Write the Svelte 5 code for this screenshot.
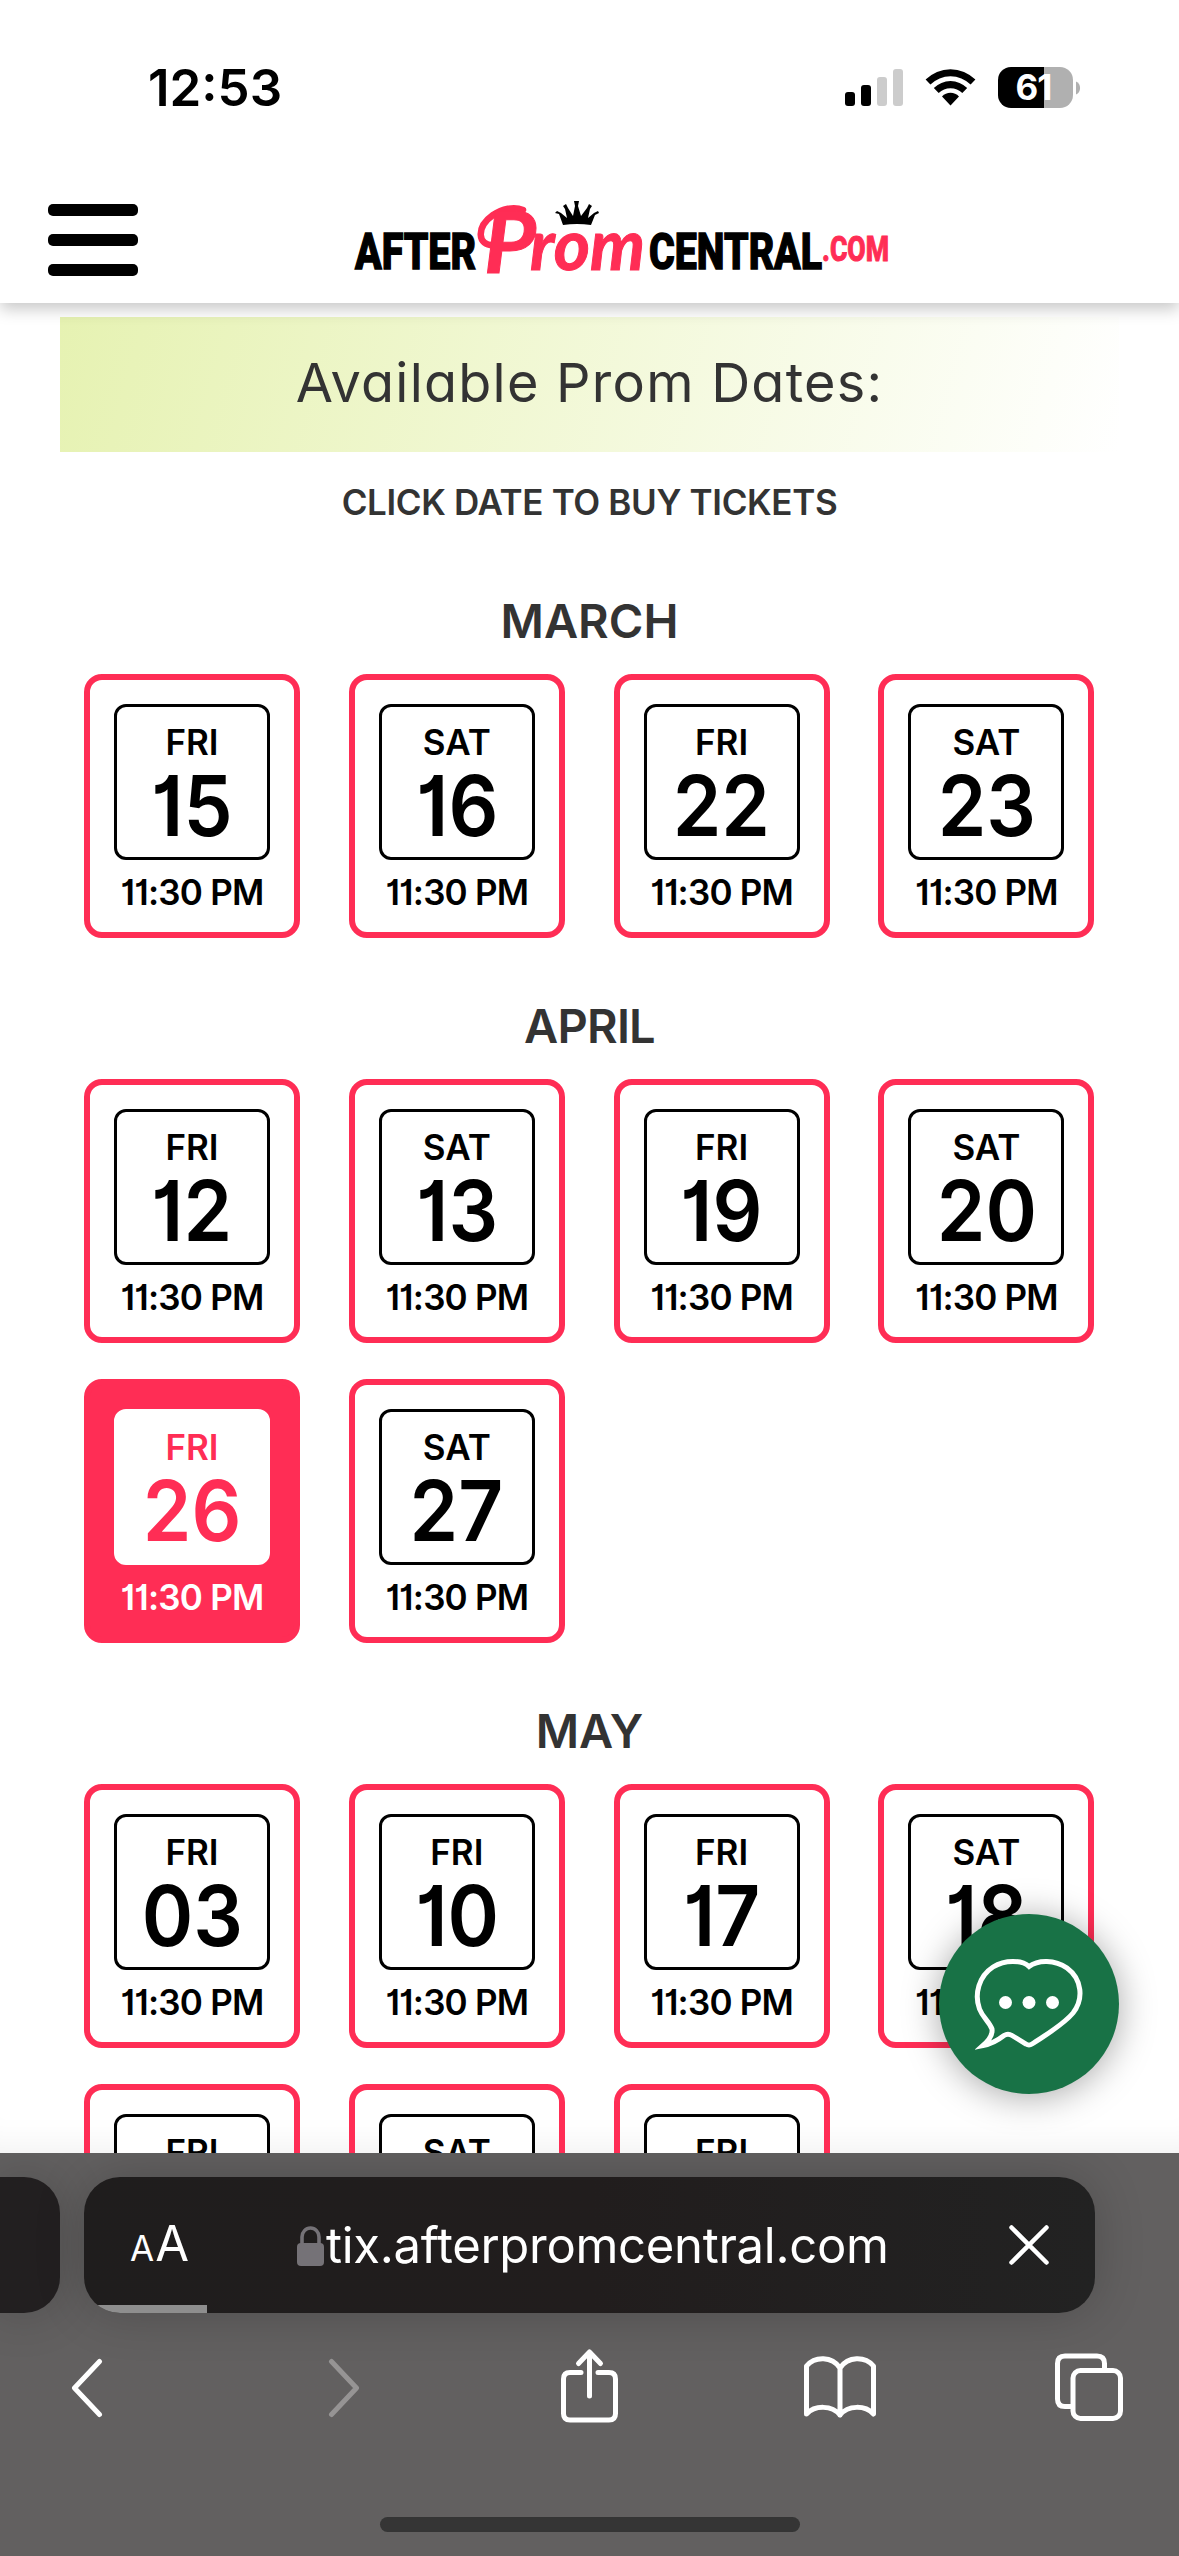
<script lang="ts">
  type Day = { dow: string; num: string; active?: boolean };
  const months: { name: string; days: Day[] }[] = [
    {
      name: 'MARCH',
      days: [
        { dow: 'FRI', num: '15' },
        { dow: 'SAT', num: '16' },
        { dow: 'FRI', num: '22' },
        { dow: 'SAT', num: '23' },
      ],
    },
    {
      name: 'APRIL',
      days: [
        { dow: 'FRI', num: '12' },
        { dow: 'SAT', num: '13' },
        { dow: 'FRI', num: '19' },
        { dow: 'SAT', num: '20' },
        { dow: 'FRI', num: '26', active: true },
        { dow: 'SAT', num: '27' },
      ],
    },
    {
      name: 'MAY',
      days: [
        { dow: 'FRI', num: '03' },
        { dow: 'FRI', num: '10' },
        { dow: 'FRI', num: '17' },
        { dow: 'SAT', num: '18' },
        { dow: 'FRI', num: '24' },
        { dow: 'SAT', num: '25' },
        { dow: 'FRI', num: '31' },
      ],
    },
  ];
</script>

<div class="screen">
  <div class="status">
    <span class="clock">12:53</span>
    <div class="indicators">
      <svg class="signal" width="58" height="37" viewBox="0 0 58 37">
        <rect x="0" y="23" width="10" height="14" rx="3" />
        <rect x="16" y="16" width="10" height="21" rx="3" />
        <rect x="32" y="8" width="10" height="29" rx="3" fill="#ccc" />
        <rect x="48" y="0" width="10" height="37" rx="3" fill="#ccc" />
      </svg>
      <svg class="wifi" width="51" height="37" viewBox="0 0 51 37">
        <path d="M0.6 10.6a35 35 0 0 1 49.8 0l-4.8 5a28.6 28.6 0 0 0-40.2 0z" />
        <path d="M8.8 19a23.6 23.6 0 0 1 33.4 0l-4.9 5a16.8 16.8 0 0 0-23.6 0z" />
        <path d="M17 27.4a12 12 0 0 1 17 0L25.5 36.5z" />
      </svg>
      <div class="battery"><span>61</span></div>
      <svg class="nub" width="5" height="14" viewBox="0 0 5 14"><path d="M0 0.5C5.4 2.5 5.4 11.500 0 13.500z" fill="#b0b0b0" /></svg>
    </div>
  </div>

  <header>
    <div class="burger"><i></i><i></i><i></i></div>
    <svg class="logo" width="540" height="84" viewBox="352 198 540 84">
      <g class="block">
        <text x="355" y="269" textLength="121" lengthAdjust="spacingAndGlyphs">AFTER</text>
        <text x="649" y="269" textLength="173" lengthAdjust="spacingAndGlyphs">CENTRAL</text>
      </g>
      <text class="com" x="822" y="260.500" textLength="67" lengthAdjust="spacingAndGlyphs">.COM</text>
      <g class="script">
        <path d="M494 245C477 246 476 227 493 215C502 209 514 206 523 210" fill="none" stroke="#ff2d55" stroke-width="6.500" stroke-linecap="round" />
        <text class="big" x="484" y="273" textLength="52" lengthAdjust="spacingAndGlyphs">P</text>
        <text class="small" x="530" y="270" textLength="115" lengthAdjust="spacingAndGlyphs">rom</text>
      </g>
      <path d="M563 225L559 214L555 213L557 211L561 213L567 218L565 209L563 206L566 204L568 208L573 216L575 206L574 201H579L578 206L581 216L587 208L589 204L592 206L590 209L588 218L594 213L598 211L599 213L595 215L591 225Q577 223 563 225z" />
    </svg>
  </header>

  <main>
    <div class="banner"><span>Available Prom Dates:</span></div>
    <p class="hint">CLICK DATE TO BUY TICKETS</p>
    {#each months as month}
      <section>
        <h2 class:tight={month.name === 'APRIL'}>{month.name}</h2>
        <div class="grid">
          {#each month.days as day}
            <div class="card" class:active={day.active}>
              <div class="date">
                <span class="dow">{day.dow}</span>
                <span class="num">{day.num}</span>
              </div>
              <span class="time">11:30 PM</span>
            </div>
          {/each}
        </div>
      </section>
    {/each}
  </main>

  <div class="chat">
    <svg width="180" height="180" viewBox="0 0 180 180">
      <path d="M90 52.500C83 46 66 45.500 54 53C40 62 35 80 40.500 95C44 104 50 107 53 115C54 122 48 128 44 131.500C52 130 58 127 65 121.500Q69 119 73 121.500L87 130Q90 132 93 130C108 120 124 111 134 99C145 85 143 65 128 54C116 45.500 99 45.500 90 52.500z" fill="none" stroke="#fff" stroke-width="5" />
      <circle cx="66.500" cy="88.500" r="6.500" fill="#fff" />
      <circle cx="90" cy="88.500" r="6.500" fill="#fff" />
      <circle cx="113.500" cy="88.500" r="6.500" fill="#fff" />
    </svg>
  </div>

  <footer>
    <div class="tabs">
      <div class="prev"></div>
      <div class="address">
        <div class="aa"><span class="minor">A</span><span>A</span></div>
        <div class="url">
          <svg width="27" height="40" viewBox="0 0 27 40">
            <rect x="0" y="17" width="27" height="23" rx="4" fill="#757277" />
            <path d="M5 18V11a8.500 9 0 0 1 17 0V18" fill="none" stroke="#757277" stroke-width="3.600" />
          </svg>
          <span>tix.afterpromcentral.com</span>
        </div>
        <svg class="stop" width="40" height="40" viewBox="0 0 40 40"><path d="M2.500 2.500L37.500 37.500M37.500 2.500L2.500 37.500" stroke="#fff" stroke-width="4.500" stroke-linecap="round" /></svg>
        <div class="progress"></div>
      </div>
    </div>
    <nav>
      <svg width="32" height="76" viewBox="0 0 32 76"><path d="M28.500 13.500L3.500 40L28.500 66.500" /></svg>
      <svg class="off" width="32" height="76" viewBox="0 0 32 76"><path d="M3.500 13.500L28.500 40L3.500 66.500" /></svg>
      <svg width="57" height="76" viewBox="0 0 57 76"><path d="M20 24.500H9Q2.500 24.500 2.500 31V65.500Q2.500 72 9 72H48Q54.500 72 54.500 65.500V31Q54.500 24.500 48 24.500H37M28.500 48V5M17.500 15.500L28.500 4L39.500 15.500" /></svg>
      <svg width="72" height="76" viewBox="0 0 72 76"><path d="M36 20C28 8 11 8 2.500 18V66C11 57 28 57 36 67C44 57 61 57 69.500 66V18C61 8 44 8 36 20V67" /></svg>
      <svg width="68" height="76" viewBox="0 0 68 76"><path d="M17 58.500H10Q2.500 58.500 2.500 51V15.500Q2.500 8 10 8H42Q49.500 8 49.500 15.500V22" /><rect x="18" y="22.500" width="47.500" height="48" rx="7.500" /></svg>
    </nav>
    <div class="home"></div>
  </footer>
</div>

<style>
  :global(body) {
    margin: 0;
    background: #fff;
  }
  .screen {
    position: relative;
    width: 1179px;
    height: 2556px;
    overflow: hidden;
    display: flex;
    flex-direction: column;
    background: #fff;
    font-family: Inter, 'Open Sans', sans-serif;
    color: #000;
  }
  .status {
    flex: none;
    height: 177px;
    box-sizing: border-box;
    padding: 67px 98px 0 148px;
    display: flex;
    justify-content: space-between;
    align-items: flex-start;
    background: #fff;
    z-index: 2;
  }
  .clock {
    font-size: 51px;
    font-weight: 600;
    line-height: 42px;
  }
  .indicators {
    display: flex;
    align-items: center;
    height: 41px;
  }
  .wifi {
    margin-left: 22px;
  }
  .battery {
    margin-left: 22px;
    width: 75px;
    height: 41px;
    border-radius: 13px;
    background: linear-gradient(90deg, #000 46px, #b0b0b0 46px);
    color: #fff;
    font-size: 35px;
    font-weight: 700;
    line-height: 41px;
    text-align: center;
    letter-spacing: -1px;
  }
  .battery span {
    margin-right: 4px;
  }
  .nub {
    margin-left: 3px;
  }
  header {
    flex: none;
    height: 126px;
    box-sizing: border-box;
    padding: 21px 0 0 48px;
    display: flex;
    align-items: flex-start;
    background: #fff;
    box-shadow: 0 6px 15px rgba(0, 0, 0, 0.22);
    z-index: 1;
  }
  .burger {
    margin-top: 6px;
    width: 90px;
    display: flex;
    flex-direction: column;
    gap: 18px;
  }
  .burger i {
    height: 12px;
    border-radius: 5px;
    background: #000;
  }
  .logo {
    margin-left: 214px;
    overflow: visible;
  }
  .block text {
    font: 800 50px 'Roboto', sans-serif;
    stroke: #000;
    stroke-width: 1.5px;
  }
  .com {
    font: 800 35px 'Roboto', sans-serif;
    fill: #ff2d55;
    stroke: #ff2d55;
    stroke-width: 1px;
  }
  .script text {
    font-family: Lato, sans-serif;
    font-style: italic;
    font-weight: 700;
    fill: #ff2d55;
    stroke: #ff2d55;
    stroke-width: 1px;
  }
  .script .big {
    font-size: 86px;
  }
  .script .small {
    font-size: 70px;
  }
  main {
    flex: none;
    height: 1850px;
    overflow: hidden;
    padding: 14px 60px 0;
    box-sizing: border-box;
    box-shadow: inset 0 -40px 40px -40px rgba(0, 0, 0, 0.08);
  }
  .banner {
    height: 135px;
    display: flex;
    justify-content: center;
    background: linear-gradient(105deg, #e6f2b2, #fff);
    color: #333;
    font-size: 54px;
    line-height: 131px;
    letter-spacing: 1.25px;
    font-feature-settings: 'cv11';
    white-space: nowrap;
  }
  .hint {
    margin: 25px 0 6px;
    text-align: center;
    color: #333;
    font-size: 35px;
    font-weight: 600;
    line-height: 50px;
    letter-spacing: -0.35px;
  }
  h2 {
    margin: 0 0 23px;
    padding-top: 58px;
    text-align: center;
    color: #333;
    font-size: 47px;
    font-weight: 600;
    line-height: 60px;
  }
  .tight {
    letter-spacing: -0.8px;
  }
  .grid {
    margin: 0 24.6px 0 24px;
    display: grid;
    grid-template-columns: repeat(4, 216px);
    justify-content: space-between;
    row-gap: 36px;
  }
  .card {
    height: 264px;
    box-sizing: border-box;
    border: 6px solid #ff2d55;
    border-radius: 18px;
    padding-top: 24px;
    display: flex;
    flex-direction: column;
    align-items: center;
    font-weight: 600;
    font-feature-settings: 'cv01', 'calt' 0;
  }
  .date {
    width: 156px;
    height: 156px;
    box-sizing: border-box;
    border: 3px solid #000;
    border-radius: 12px;
    padding-top: 13px;
    display: flex;
    flex-direction: column;
    align-items: center;
    background: #fff;
  }
  .dow {
    font-size: 35px;
    line-height: 45px;
  }
  .num {
    font-size: 84px;
    line-height: 81px;
    transform: scaleX(0.93);
  }
  .time {
    margin-top: 12px;
    font-size: 35px;
    line-height: 40px;
    letter-spacing: -0.8px;
    white-space: nowrap;
  }
  .active {
    background: #ff2d55;
    color: #fff;
  }
  .active .date {
    border-color: #fff;
    color: #ff2d55;
  }
  .chat {
    position: absolute;
    left: 939px;
    top: 1914px;
    width: 180px;
    height: 180px;
    border-radius: 50%;
    background: #187246;
    box-shadow: 0 3px 36px rgba(0, 0, 0, 0.35);
  }
  footer {
    position: relative;
    flex: none;
    height: 403px;
    box-sizing: border-box;
    padding-top: 24px;
    background: #626060;
    color: #fff;
    overflow: hidden;
  }
  .tabs {
    display: flex;
    gap: 24px;
  }
  .prev {
    width: 60px;
    height: 136px;
    border-radius: 0 36px 36px 0;
    background: #221f20;
    box-shadow: 0 0 50px rgba(0, 0, 0, 0.2);
  }
  .address {
    position: relative;
    width: 1011px;
    height: 136px;
    box-sizing: border-box;
    padding: 2px 46px 0 46px;
    border-radius: 36px;
    overflow: hidden;
    display: flex;
    align-items: center;
    background: linear-gradient(90deg, #1f1d1d, #211d1d 50%, #222);
    box-shadow: 0 0 50px rgba(0, 0, 0, 0.2);
  }
  .aa {
    width: 167px;
    display: flex;
    align-items: baseline;
    gap: 1px;
    font-size: 49px;
    line-height: 60px;
  }
  .minor {
    font-size: 35px;
  }
  .url {
    display: flex;
    align-items: center;
    gap: 2px;
    font-size: 49px;
    line-height: 60px;
    letter-spacing: -0.3px;
    white-space: nowrap;
  }
  .stop {
    margin: -2px 0 0 auto;
  }
  .progress {
    position: absolute;
    left: 0;
    bottom: 0;
    width: 123px;
    height: 8px;
    background: #8e8e8e;
  }
  nav {
    margin: 35px 0 0 71px;
    display: grid;
    grid-template-columns: 257px 233px 243px 251px 68px;
  }
  nav svg {
    fill: none;
    stroke: #fff;
    stroke-width: 5px;
    stroke-linecap: round;
    stroke-linejoin: round;
  }
  nav .off {
    stroke: #969494;
  }
  .home {
    margin: 93px auto 0;
    width: 420px;
    height: 15px;
    border-radius: 8px;
    background: #353535;
  }
</style>
